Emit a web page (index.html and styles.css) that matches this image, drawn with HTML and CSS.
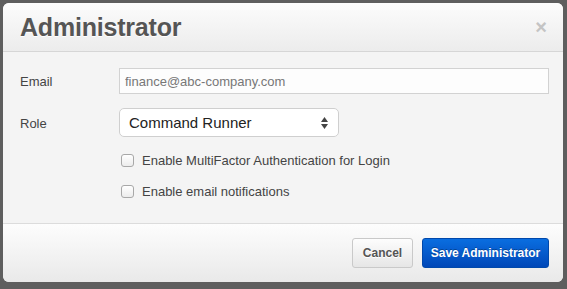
FILE: index.html
```html
<!DOCTYPE html>
<html lang="en">
<head>
    <meta charset="UTF-8">
    <title>Administrator</title>
    <link rel="stylesheet" href="styles.css">
</head>
<body>
    <div class="modal">
        <div class="modal-header">
            <h3>Administrator</h3>
            <span class="close">&times;</span>
        </div>
        <div class="modal-body">
            <div class="row">
                <label class="label">Email</label>
                <input class="text-input" type="text" value="finance@abc-company.com">
            </div>
            <div class="row">
                <label class="label">Role</label>
                <div class="select">
                    <span>Command Runner</span>
                    <svg class="arrows" width="7" height="12" viewBox="0 0 7 12">
                        <path d="M3.5 0 L7 5 L0 5 Z" fill="#444"/>
                        <path d="M0 7 L7 7 L3.5 12 Z" fill="#444"/>
                    </svg>
                </div>
            </div>
            <div class="checks">
                <label class="check"><span class="box"></span>Enable MultiFactor Authentication for Login</label>
                <label class="check"><span class="box"></span>Enable email notifications</label>
            </div>
        </div>
        <div class="modal-footer">
            <button class="btn">Cancel</button>
            <button class="btn btn-primary">Save Administrator</button>
        </div>
    </div>
</body>
</html>
```

FILE: styles.css
```css
html, body {
    margin: 0;
    height: 100%;
}
body {
    background-color: #5e5e5e;
    font-family: 'Liberation Sans', Arial, sans-serif;
    padding: 3px 4px 7px 3px;
    box-sizing: border-box;
}
.modal {
    background-color: #f4f4f4;
    border-radius: 6px;
    height: 279px;
    display: flex;
    flex-direction: column;
    overflow: hidden;
}
.modal-header {
    height: 48px;
    border-bottom: 1px solid #d6d6d6;
    background: linear-gradient(#fcfcfc, #ececec);
    display: flex;
    align-items: center;
    justify-content: space-between;
    padding: 0 16px 0 17px;
}
.modal-header h3 {
    margin: 0;
    font-size: 25px;
    font-weight: bold;
    color: #555;
    letter-spacing: -0.2px;
    text-shadow: 0 1px 0 #fff;
}
.close {
    font-size: 20px;
    font-weight: bold;
    color: #c4c4c4;
    line-height: 1;
}
.modal-body {
    flex: 1;
    padding: 16px 14px 0 17px;
    border-bottom: 1px solid #dcdcdc;
}
.row {
    display: flex;
    align-items: center;
    margin-bottom: 14px;
}
.label {
    width: 99px;
    font-size: 13px;
    color: #444;
    padding-top: 1px;
}
.text-input {
    flex: 1;
    height: 26px;
    box-sizing: border-box;
    border: 1px solid #d2d2d2;
    background: #fdfdfd;
    font-family: 'Liberation Sans', Arial, sans-serif;
    font-size: 13px;
    color: #777;
    padding: 0 5px;
    margin: 0;
    outline: none;
}
.select {
    width: 220px;
    height: 29px;
    box-sizing: border-box;
    border: 1px solid #cfcfcf;
    border-radius: 5px;
    background: #fff;
    display: flex;
    align-items: center;
    justify-content: space-between;
    padding: 0 10px 0 9px;
    font-size: 15px;
    color: #222;
}
.checks {
    padding-left: 101px;
    padding-top: 2px;
}
.check {
    display: flex;
    align-items: center;
    font-size: 13px;
    color: #444;
    margin-bottom: 16px;
}
.box {
    width: 11px;
    height: 11px;
    border: 1px solid #a8a8a8;
    border-radius: 3px;
    background: linear-gradient(#fff, #ececec);
    margin-right: 8px;
}
.modal-footer {
    height: 58px;
    background: linear-gradient(#fdfdfd, #e9e9e9);
    display: flex;
    align-items: center;
    justify-content: flex-end;
    padding: 0 14px 0 0;
    gap: 9px;
}
.btn {
    height: 30px;
    font-family: 'Liberation Sans', Arial, sans-serif;
    font-size: 12px;
    font-weight: bold;
    border-radius: 3px;
    cursor: pointer;
    margin: 0;
    color: #555;
    border: 1px solid #c9c9c9;
    background: linear-gradient(#fdfdfd, #e6e6e6);
    text-shadow: 0 1px 0 #fff;
    width: 61px;
    padding: 0;
}
.btn-primary {
    width: 127px;
    color: #fff;
    border: 1px solid #0048ab;
    background: linear-gradient(#0a6ee0, #0047b8);
    text-shadow: 0 -1px 0 rgba(0, 0, 0, 0.3);
}
```
